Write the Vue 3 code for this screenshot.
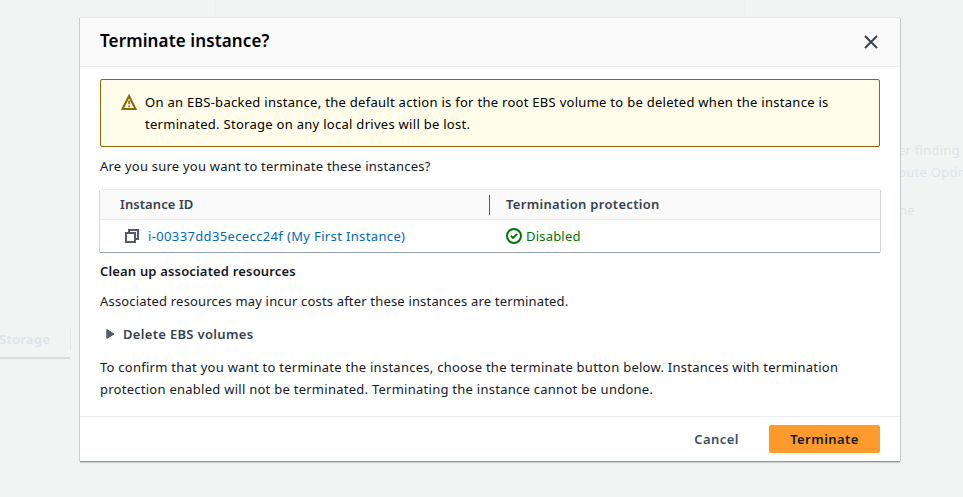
<script setup>
const columns = [
  { key: 'id', label: 'Instance ID' },
  { key: 'protection', label: 'Termination protection' },
]
const instances = [{ id: 'i-00337dd35ececc24f', name: 'My First Instance', protection: 'Disabled' }]
</script>

<template>
  <div class="screen">
    <div class="backdrop">
      <div class="summary">
        <div class="summary-cell"></div>
        <div class="summary-cell"></div>
        <div class="summary-cell details">
          <span>er finding</span>
          <span class="faded-link">pute Optim</span>
          <span class="detail-last">ne</span>
        </div>
      </div>
      <div class="tabs"><div class="tab"><span>Storage</span></div></div>
    </div>

    <section class="modal" role="dialog">
      <header class="modal-header">
        <h2>Terminate instance?</h2>
        <button class="close" aria-label="Close">
          <svg width="16" height="16" viewBox="0 0 16 16"><path d="M2 2l12 12M14 2L2 14" /></svg>
        </button>
      </header>

      <div class="modal-body">
        <div class="alert">
          <svg class="warn" width="16" height="16" viewBox="0 0 16 16">
            <path d="M8 2L14.5 15H1.5z" />
            <path class="mark" d="M8 6.5v3.8M8 11.5v1.7" />
          </svg>
          <p>On an EBS-backed instance, the default action is for the root EBS volume to be deleted when the instance is<br>terminated. Storage on any local drives will be lost.</p>
        </div>

        <p class="question">Are you sure you want to terminate these instances?</p>

        <div class="table">
          <div class="row head">
            <div v-for="c in columns" :key="c.key" class="cell" :class="'col-' + c.key"><span>{{ c.label }}</span></div>
          </div>
          <div v-for="i in instances" :key="i.id" class="row">
            <div class="cell id">
              <svg class="copy" width="16" height="16" viewBox="0 0 16 16">
                <path d="M2 5h9v9H2zM5 5V2h9v9h-3" />
              </svg>
              <a>{{ i.id }} ({{ i.name }})</a>
            </div>
            <div class="cell status">
              <svg width="16" height="16" viewBox="0 0 16 16">
                <circle cx="8" cy="8" r="7" /><path d="M4.8 7.6l2.3 2.3 4.1-4" />
              </svg>
              <span>{{ i.protection }}</span>
            </div>
          </div>
        </div>

        <h3>Clean up associated resources</h3>
        <p class="note">Associated resources may incur costs after these instances are terminated.</p>
        <div class="expander">
          <svg width="9" height="10" viewBox="0 0 9 10"><path d="M0.8 0.5L8 5 0.8 9.5z" /></svg>
          <span>Delete EBS volumes</span>
        </div>
        <p class="confirm">To confirm that you want to terminate the instances, choose the terminate button below. Instances with termination<br>protection enabled will not be terminated. Terminating the instance cannot be undone.</p>
      </div>

      <footer class="modal-footer">
        <button class="cancel">Cancel</button>
        <button class="primary">Terminate</button>
      </footer>
    </section>
  </div>
</template>

<style>
body { background: #f2f4f4; }
</style>

<style scoped>
* { box-sizing: border-box; }
p, h2, h3 { margin: 0; }
button { border: 0; background: none; padding: 0; font: inherit; letter-spacing: inherit; color: inherit; }
svg { display: block; flex: none; fill: none; stroke: currentColor; stroke-width: 2; }
.screen {
  position: relative; width: 963px; height: 497px; overflow: hidden; background: #f2f4f4;
  font: 13px/22px "Noto Sans", "Open Sans", sans-serif; letter-spacing: 0.26px; color: #16191f; white-space: nowrap;
}
.backdrop { height: 100%; color: #e1e4e4; }
.summary { display: grid; grid-template-columns: 216px 529px 1fr; height: 319px; }
.summary-cell { border-right: 1px solid #eff1f1; }
.details { display: flex; flex-direction: column; padding: 139px 0 0 153px; border: 0; }
.faded-link { color: #dce6ed; }
.detail-last { margin-top: 16px; padding-left: 1px; }
.tabs { display: flex; align-items: flex-start; height: 41px; border: solid #f0f2f2; border-width: 1px 0; }
.tab {
  display: flex; align-items: center; width: 70px; height: 39px;
  color: #dce5ec; font-weight: 600; border-bottom: 2px solid #dadddd;
}
.tab span { flex: 1; margin-left: -1px; }
.tab::after { content: ""; width: 1px; height: 22px; margin-right: -1px; background: #e3e6e6; }
.modal {
  position: absolute; left: 80px; top: 18px; width: 820px; height: 443px;
  display: flex; flex-direction: column; background: #fff;
  box-shadow: 0 -1px 0 #e6e9e9, -1px 0 0 #c9cdcf, 1px 0 0 #c4c9cb, 0 1px 0 #8a9296, 0 2px 1px #d0d5d5;
}
.modal-header {
  display: flex; justify-content: space-between; align-items: center;
  height: 49px; padding: 0 21px 0 20px; background: #fafafa; border-bottom: 1px solid #eaeded;
}
h2 { font-size: 17px; line-height: 22px; font-weight: 600; letter-spacing: 0.13px; color: #000; padding-bottom: 2px; }
.close { color: #36424f; }
.modal-body { flex: 1; padding: 12px 20px 0; }
.alert {
  display: flex; height: 68px; padding: 11px 19px 0 20px; gap: 8px; letter-spacing: 0.283px;
  background: #fffce9; border: 1px solid #906806; border-radius: 2px; color: #000;
}
.warn { color: #8d6605; margin-top: 3px; }
.warn .mark { stroke-width: 1.6; }
.question { margin-top: 8px; letter-spacing: 0.22px; }
.table {
  height: 62px; margin-top: 13px; background: #fff;
  box-shadow: 0 -1px 0 #eaeded, -1px 0 0 #d0d5d7, 1px 0 0 #d0d5d7, 0 1px 0 #96a0a5;
}
.row { display: grid; grid-template-columns: 390px 1fr; height: 32px; align-items: center; }
.head { height: 30px; background: #fafafa; border-bottom: 1px solid #eaeded; font-weight: 600; color: #36424f; }
.cell { display: flex; align-items: center; height: 22px; padding-left: 16px; }
.head .cell { height: 20px; }
.head .cell span { padding-bottom: 2px; }
.col-id { padding-left: 20px; border-right: 1px solid #545b64; letter-spacing: 0.08px; }
.col-protection { letter-spacing: 0.32px; }
.cell.id { padding-left: 24px; gap: 8px; color: #0069b8; letter-spacing: 0.36px; }
.copy { color: #545b64; }
.status { gap: 4px; color: #007503; letter-spacing: 0.2px; }
h3 { margin-top: 8px; font-size: 13px; line-height: 22px; font-weight: 600; letter-spacing: 0.17px; }
.note { margin-top: 8px; letter-spacing: 0.175px; }
.expander {
  display: flex; align-items: center; height: 22px; margin-top: 11px; padding-left: 6px; gap: 8px;
  font-weight: 600; letter-spacing: 0.32px; color: #36424f;
}
.expander svg { fill: #545b64; stroke: #545b64; stroke-width: 1; stroke-linejoin: round; }
.confirm { margin-top: 11px; }
.modal-footer {
  display: flex; justify-content: flex-end; align-items: center; gap: 30px;
  height: 45px; padding-right: 20px; border-top: 1px solid #eaeded; font-weight: 600; letter-spacing: 0.45px;
}
.cancel { color: #414d5c; }
.primary { width: 111px; height: 28px; border-radius: 2px; background: #ff9b2d; color: #16191f; }
</style>
